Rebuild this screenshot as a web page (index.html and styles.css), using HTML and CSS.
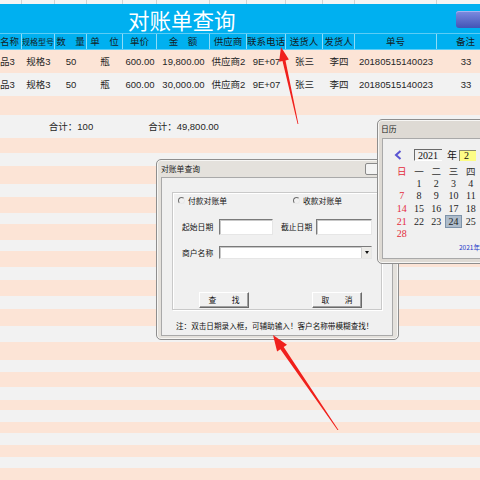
FILE: index.html
```html
<!DOCTYPE html>
<html lang="zh-CN">
<head>
<meta charset="utf-8">
<title>对账单查询</title>
<link rel="stylesheet" href="styles.css">
</head>
<body>
<div class="sheet">
  <div class="cols toprow"><span></span><span></span><span></span><span></span><span></span><span></span><span></span><span></span><span></span><span></span><span></span><span></span></div>
  <div class="titleband"><span class="title">对账单查询</span><span class="tbtn"></span></div>
  <div class="cols hdr">
    <span class="first">名称</span><span class="narrow">规格型号</span><span>数　量</span><span>单　位</span><span>单价</span><span>金　额</span><span>供应商</span><span>联系电话</span><span>送货人</span><span>发货人</span><span>单号</span><span>备注</span>
  </div>
  <div class="cols data p">
    <span class="first">品3</span><span>规格3</span><span>50</span><span>瓶</span><span>600.00</span><span>19,800.00</span><span>供应商2</span><span>9E+07</span><span>张三</span><span>李四</span><span>20180515140023</span><span>33</span>
  </div>
  <div class="cols data g">
    <span class="first">品3</span><span>规格3</span><span>50</span><span>瓶</span><span>600.00</span><span>30,000.00</span><span>供应商2</span><span>9E+07</span><span>张三</span><span>李四</span><span>20180515140023</span><span>33</span>
  </div>
  <div class="p h19"></div>
  <div class="cols data g">
    <span></span><span></span><span>合计：100</span><span></span><span></span><span>合计：49,800.00</span><span></span><span></span><span></span><span></span><span></span><span></span>
  </div>
  <div class="p h15"></div><div class="g h13"></div>
  <div class="p h18"></div><div class="g h13"></div>
  <div class="p h16"></div><div class="g h11"></div>
  <div class="p h16"></div><div class="g h11"></div>
  <div class="p h16"></div><div class="g h13"></div>
  <div class="p h16"></div><div class="g h13"></div>
  <div class="p h17"></div><div class="g h16"></div>
  <div class="p h18"></div><div class="g h12"></div>
  <div class="p h15"></div><div class="g h13"></div>
  <div class="p h10"></div><div class="g h12"></div>
  <div class="p h11"></div><div class="g h12"></div>
  <div class="p h12"></div><div class="g h11"></div>
  <div class="p h12"></div>
</div>

<div class="win query">
  <div class="wtitle"><span>对账单查询</span><span class="wbtn"></span></div>
  <div class="wbody">
    <div class="group">
      <div class="grow r1">
        <label class="radio first"><i></i>付款对账单</label>
        <label class="radio"><i></i>收款对账单</label>
      </div>
      <div class="grow r2">
        <span class="lbl">起始日期</span><span class="inp w54"></span>
        <span class="lbl lbl2">截止日期</span><span class="inp w56"></span>
      </div>
      <div class="grow r3">
        <span class="lbl">商户名称</span><span class="inp combo"><b class="drop"></b></span>
      </div>
      <div class="grow r4">
        <span class="btn b1">查　　找</span><span class="btn b2">取　　消</span>
      </div>
    </div>
    <p class="note">注：双击日期录入框，可辅助输入！客户名称带模糊查找！</p>
  </div>
</div>

<div class="win cal">
  <div class="wtitle"><span>日历</span></div>
  <div class="wbody cbody">
    <div class="nav">
      <svg class="prev" width="8" height="10" viewBox="0 0 8 10"><path d="M6.5 1 L2 5 L6.5 9" fill="none" stroke="#5a55d2" stroke-width="2"/></svg>
      <span class="ybox">2021</span>
      <span class="nian">年</span>
      <span class="mbox">2</span>
    </div>
    <div class="days">
      <span class="wk red">日</span><span class="wk">一</span><span class="wk">二</span><span class="wk">三</span><span class="wk">四</span>
      <span></span><span>1</span><span>2</span><span>3</span><span>4</span>
      <span class="red">7</span><span>8</span><span>9</span><span>10</span><span>11</span>
      <span class="red">14</span><span>15</span><span>16</span><span>17</span><span>18</span>
      <span class="red">21</span><span>22</span><span>23</span><span class="sel">24</span><span>25</span>
      <span class="red">28</span><span></span><span></span><span></span><span></span>
    </div>
    <div class="today">2021年</div>
  </div>
</div>

<svg class="arrows" width="480" height="480" viewBox="0 0 480 480">
  <polygon fill="#f0201c" points="281,47 288.9,59.6 285.5,60.4 298.4,124 297.6,124 282.5,61 279.1,61.8"/>
  <polygon fill="#f0201c" points="273,335 287,344.8 283.7,347.1 338.5,430 337.5,430 280.4,349.3 277.1,351.6"/>
</svg>
</body>
</html>
```

FILE: styles.css
```css
* { box-sizing: border-box; margin: 0; padding: 0; }
html, body { width: 480px; height: 480px; overflow: hidden; }
body {
  position: relative;
  background: #f2f2f2;
  font-family: "Liberation Sans", "Noto Sans CJK SC", sans-serif;
  color: #222;
}

/* spreadsheet */
.sheet { width: 495px; }
.cols {
  display: grid;
  grid-template-columns: 22px 33px 32px 36px 34px 53px 37px 39px 37px 32px 82px 58px;
}
.toprow { height: 4px; background: #f4f4f4; }
.toprow span { border-right: 1px solid #d2d2d2; }

.titleband {
  height: 29px;
  background: #00b0f0;
  display: flex;
  align-items: center;
  padding-left: 128px;
  padding-top: 2px;
}
.title {
  font-family: "Noto Sans CJK SC", sans-serif;
  font-size: 21.5px;
  line-height: 1;
  color: #fff;
}
.tbtn {
  margin-left: auto;
  margin-right: 13px;
  width: 26px;
  height: 17px;
  border-radius: 3px;
  background: linear-gradient(#7d8ce0, #4354b6);
  box-shadow: inset 0 1px 0 #a8b3ee;
}

.hdr {
  height: 17px;
  background: #00b0f0;
  border-top: 1px solid #5cccf5;
  border-bottom: 1px solid #5cccf5;
  font-family: "Noto Sans CJK SC", sans-serif;
  font-size: 9.5px;
  color: #141c24;
}
.hdr span {
  display: flex;
  align-items: center;
  justify-content: center;
  white-space: nowrap;
  overflow: hidden;
  border-right: 1px solid #8edbf7;
  line-height: 1;
}
.hdr .narrow { font-size: 8px; }

.data { height: 23px; font-size: 9.5px; color: #262626; }
.data span {
  display: flex;
  align-items: center;
  justify-content: center;
  white-space: nowrap;
  line-height: 1;
}
.cols .first { justify-content: flex-start; }

.p { background: #fce4d6; }
.g { background: #f2f2f2; }
.h10 { height: 10px; } .h11 { height: 11px; } .h12 { height: 12px; }
.h13 { height: 13px; } .h15 { height: 15px; } .h16 { height: 16px; }
.h17 { height: 17px; } .h18 { height: 18px; } .h19 { height: 19px; }

/* windows */
.win {
  position: absolute;
  border: 1px solid #8e8e8e;
  border-radius: 5px;
  background: #e4e1dc;
  box-shadow: inset 0 0 0 1px #f7f6f4;
  font-family: "Noto Sans CJK SC", sans-serif;
  color: #111;
  display: flex;
  flex-direction: column;
}
.wtitle {
  height: 17px;
  flex: none;
  display: flex;
  align-items: center;
  padding-left: 4px;
  font-size: 7.8px;
  line-height: 1;
  color: #1a1a1a;
}
.wbtn {
  margin-left: auto;
  margin-right: 17px;
  width: 16px;
  height: 12px;
  border: 1px solid #8a8a8a;
  border-radius: 2px;
  background: #f3f3f3;
}
.wbody {
  flex: 1;
  background: #f0f0f0;
  border: 1px solid #a9a9a9;
}

.query { left: 156px; top: 159px; width: 243px; height: 181px; }
.query .wbody { margin: 0 5px 3px 4px; }

.group {
  margin: 14px 0 0 10px;
  width: 210px;
  height: 118px;
  border: 1px solid #c9c9c9;
  box-shadow: 1px 1px 0 #fff, inset 1px 1px 0 #fff;
  display: flex;
  flex-direction: column;
  font-size: 7.8px;
  line-height: 1;
}
.grow { display: flex; align-items: center; flex: none; }
.r1 { height: 10px; margin-top: 3px; padding-left: 5px; }
.radio { display: flex; align-items: center; gap: 3px; }
.radio.first { width: 115px; }
.radio i {
  display: block;
  width: 7px;
  height: 7px;
  border-radius: 50%;
  border: 1px solid;
  border-color: #6e6e6e #e8e8e8 #e8e8e8 #6e6e6e;
  background: #f0f0f0;
}
.r2 { height: 16px; margin-top: 13px; padding-left: 9px; }
.lbl { width: 37px; }
.lbl2 { width: 35px; margin-left: 8px; }
.inp {
  height: 16px;
  background: #fff;
  border: 1px solid;
  border-color: #7a7a7a #e6e6e6 #e6e6e6 #7a7a7a;
  box-shadow: inset 1px 1px 0 #c8c8c8;
}
.w54 { width: 54px; }
.w56 { width: 56px; }
.r3 { height: 13px; margin-top: 11px; padding-left: 9px; }
.combo {
  width: 153px;
  height: 13px;
  display: flex;
  justify-content: flex-end;
  align-items: stretch;
}
.drop {
  width: 10px;
  background: #ecebe8;
  border-left: 1px solid #d0d0d0;
  position: relative;
}
.drop::after {
  content: "";
  position: absolute;
  left: 3px;
  top: 4px;
  border-left: 2px solid transparent;
  border-right: 2px solid transparent;
  border-top: 3px solid #111;
}
.r4 { height: 16px; margin-top: 33px; }
.btn {
  width: 50px;
  height: 16px;
  display: flex;
  align-items: center;
  justify-content: center;
  background: #f0f0f0;
  border: 1px solid;
  border-color: #fff #6a6a6a #6a6a6a #fff;
  box-shadow: inset -1px -1px 0 #a0a0a0;
}
.b1 { margin-left: 26px; }
.b2 { margin-left: 63px; }
.note {
  margin: 11px 0 0 14px;
  font-size: 7.6px;
  line-height: 10px;
  white-space: nowrap;
  color: #111;
}

/* calendar */
.cal { left: 377px; top: 119px; width: 105px; height: 145px; background: #dedad4; border-top-right-radius: 0; border-bottom-right-radius: 0; }
.cal .wtitle { padding-left: 3px; height: 18px; }
.cbody { margin: 0 0 4px 4px; border-right: none; font-family: "Liberation Serif", "Noto Sans CJK SC", serif; }
.nav {
  height: 12px;
  margin-top: 10px;
  display: flex;
  align-items: center;
  padding-left: 11px;
}
.prev { display: block; }
.ybox {
  margin-left: 12px;
  width: 28px;
  height: 12px;
  font-size: 10px;
  line-height: 11px;
  padding-left: 3px;
  border-top: 1px solid #6a6a6a;
  border-left: 1px solid #6a6a6a;
  border-bottom: 1px solid #fff;
  color: #111;
}
.nian { margin-left: 5px; font-size: 10px; font-family: "Noto Sans CJK SC", sans-serif; line-height: 1; }
.mbox {
  margin-left: 2px;
  width: 17px;
  height: 11px;
  background: #fdfd86;
  border-top: 1px solid #8a8a70;
  border-left: 1px solid #8a8a70;
  font-size: 10px;
  line-height: 10px;
  padding-left: 4px;
}
.days {
  margin: 4px 0 0 10px;
  display: grid;
  grid-template-columns: repeat(5, 17.3px);
  grid-auto-rows: 12.6px;
  font-size: 10px;
  color: #1e1e1e;
}
.days span { display: flex; align-items: center; justify-content: center; line-height: 1; }
.days .wk { font-family: "Noto Sans CJK SC", sans-serif; font-size: 9.5px; color: #333; }
.days .red { color: #e42c3c; }
.days .sel {
  background: #aebccb;
  border: 1px solid #7d93aa;
}
.today {
  margin: 3px 0 0 76px;
  font-family: "Noto Sans CJK SC", sans-serif;
  font-size: 6.5px;
  line-height: 1;
  color: #2437c8;
  white-space: nowrap;
}

.arrows { position: absolute; left: 0; top: 0; pointer-events: none; }
```
